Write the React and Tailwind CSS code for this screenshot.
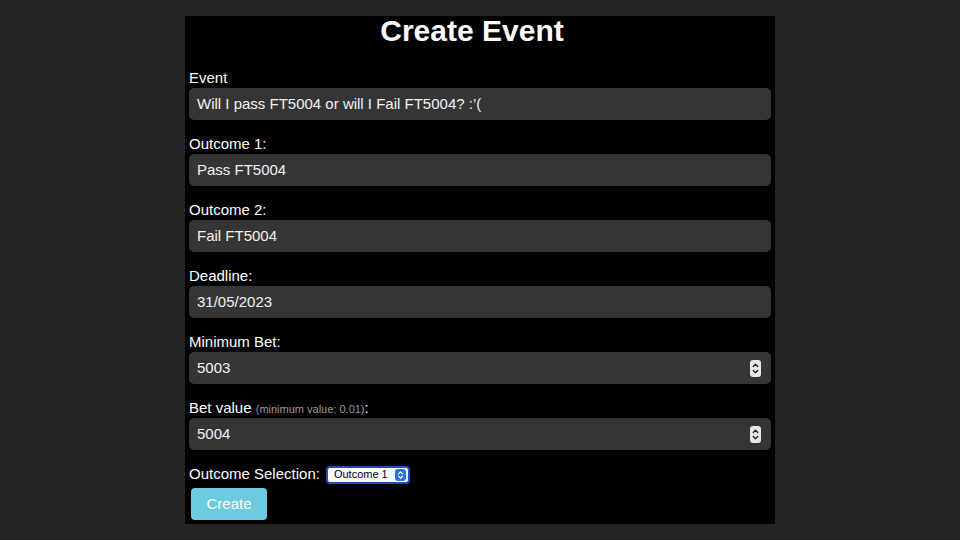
import React from 'react';

const Spinner = () => (
  <span className="flex h-[17px] w-[11px] flex-col items-center justify-center rounded-[3px] bg-[#e8e8e8]">
    <svg width="7" height="13" viewBox="0 0 7 13" fill="none" stroke="#222" strokeWidth="1.3" strokeLinecap="round" strokeLinejoin="round">
      <path d="M1.2 4.5 L3.5 2.2 L5.8 4.5" />
      <path d="M1.2 8.5 L3.5 10.8 L5.8 8.5" />
    </svg>
  </span>
);

const Field = ({ label, value, spin }) => (
  <div className="mt-[13px] flex flex-col">
    <label className="h-[21px] leading-[21px]">{label}</label>
    <div className="flex h-[32px] items-center justify-between rounded-[5px] bg-[#353535] pl-[8px] pr-[10px] text-[#f2f2f2]">
      <span>{value}</span>
      {spin && <Spinner />}
    </div>
  </div>
);

const App = () => {
  return (
    <div className="flex h-[540px] w-[960px] justify-center bg-[#232323] pt-[16px] font-['Liberation_Sans',Arial,sans-serif] text-[15px] text-white">
      <div className="h-[508px] w-[590px] bg-black px-[4px]">
        <h1 className="h-[30px] pr-[16px] text-center text-[30px] font-bold leading-[30px]">Create Event</h1>
        <div className="pt-[8px]">
          <Field label="Event" value="Will I pass FT5004 or will I Fail FT5004? :’(" />
          <Field label="Outcome 1:" value="Pass FT5004" />
          <Field label="Outcome 2:" value="Fail FT5004" />
          <Field label="Deadline:" value="31/05/2023" />
          <Field label="Minimum Bet:" value="5003" spin />
          <Field
            label={
              <span>
                Bet value <span className="text-[11px] text-[#9a9a9a]">(minimum value: 0.01)</span>:
              </span>
            }
            value="5004"
            spin
          />
        </div>
        <div className="mt-[14px] flex h-[21px] items-center gap-[6px]">
          <span>Outcome Selection:</span>
          <div className="flex h-[18px] w-[84px] items-center justify-between rounded-[4px] border-2 border-[#1d4fb8] bg-white pl-[6px] pr-[2px] text-[11px] text-black">
            <span>Outcome 1</span>
            <span className="flex h-[12px] w-[11px] items-center justify-center rounded-[3px] bg-[#2f6fe0]">
              <svg width="7" height="10" viewBox="0 0 7 10" fill="none" stroke="white" strokeWidth="1.2" strokeLinecap="round" strokeLinejoin="round">
                <path d="M1.5 3.8 L3.5 1.8 L5.5 3.8" />
                <path d="M1.5 6.2 L3.5 8.2 L5.5 6.2" />
              </svg>
            </span>
          </div>
        </div>
        <button className="ml-[2px] mt-[3px] h-[32px] w-[76px] rounded-[4px] bg-[#6ccbde] text-[15px] text-white">Create</button>
      </div>
    </div>
  );
};

export default App;
